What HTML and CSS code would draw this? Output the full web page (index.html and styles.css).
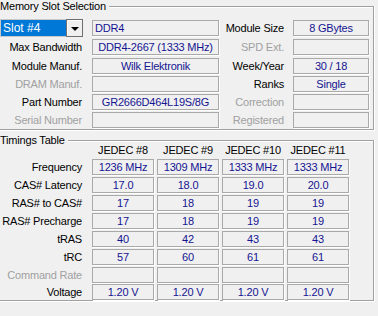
FILE: index.html
```html
<!DOCTYPE html>
<html>
<head>
<meta charset="utf-8">
<link rel="stylesheet" href="styles.css">
</head>
<body>
<div class="group group-slot">
  <div class="legend">Memory Slot Selection</div>
  <div class="slot-grid">
    <div class="combo">
      <div class="combo-value">Slot #4</div>
      <div class="combo-btn"><span class="arrow"></span></div>
    </div>
    <div class="box left">DDR4</div>
    <div class="lbl">Module Size</div>
    <div class="box">8 GBytes</div>

    <div class="lbl">Max Bandwidth</div>
    <div class="box">DDR4-2667 (1333 MHz)</div>
    <div class="lbl dis">SPD Ext.</div>
    <div class="box"></div>

    <div class="lbl">Module Manuf.</div>
    <div class="box">Wilk Elektronik</div>
    <div class="lbl">Week/Year</div>
    <div class="box">30 / 18</div>

    <div class="lbl dis">DRAM Manuf.</div>
    <div class="box"></div>
    <div class="lbl">Ranks</div>
    <div class="box">Single</div>

    <div class="lbl">Part Number</div>
    <div class="box">GR2666D464L19S/8G</div>
    <div class="lbl dis">Correction</div>
    <div class="box"></div>

    <div class="lbl dis">Serial Number</div>
    <div class="box"></div>
    <div class="lbl dis">Registered</div>
    <div class="box"></div>
  </div>
</div>

<div class="group group-timings">
  <div class="legend legend-t">Timings Table</div>
  <div class="t-grid">
    <div></div>
    <div class="hdr">JEDEC #8</div>
    <div class="hdr">JEDEC #9</div>
    <div class="hdr">JEDEC #10</div>
    <div class="hdr">JEDEC #11</div>

    <div class="tlbl">Frequency</div>
    <div class="box">1236 MHz</div>
    <div class="box">1309 MHz</div>
    <div class="box">1333 MHz</div>
    <div class="box">1333 MHz</div>

    <div class="tlbl">CAS# Latency</div>
    <div class="box">17.0</div>
    <div class="box">18.0</div>
    <div class="box">19.0</div>
    <div class="box">20.0</div>

    <div class="tlbl">RAS# to CAS#</div>
    <div class="box">17</div>
    <div class="box">18</div>
    <div class="box">19</div>
    <div class="box">19</div>

    <div class="tlbl">RAS# Precharge</div>
    <div class="box">17</div>
    <div class="box">18</div>
    <div class="box">19</div>
    <div class="box">19</div>

    <div class="tlbl">tRAS</div>
    <div class="box">40</div>
    <div class="box">42</div>
    <div class="box">43</div>
    <div class="box">43</div>

    <div class="tlbl">tRC</div>
    <div class="box">57</div>
    <div class="box">60</div>
    <div class="box">61</div>
    <div class="box">61</div>

    <div class="tlbl dis">Command Rate</div>
    <div class="box"></div>
    <div class="box"></div>
    <div class="box"></div>
    <div class="box"></div>

    <div class="tlbl">Voltage</div>
    <div class="box">1.20 V</div>
    <div class="box">1.20 V</div>
    <div class="box">1.20 V</div>
    <div class="box">1.20 V</div>
  </div>
</div>
</body>
</html>
```

FILE: styles.css
```css
html, body {
  margin: 0;
  padding: 0;
  background: #f0f0f0;
}
body {
  font-family: "Liberation Sans", Arial, sans-serif;
  font-size: 11px;
  letter-spacing: -0.2px;
  color: #000;
  width: 378px;
  height: 316px;
  overflow: hidden;
}
.group {
  width: 374px;
  box-sizing: border-box;
  border-top: 1px solid #a0a0a0;
  border-right: 1px solid #a0a0a0;
  border-bottom: 1px solid #a0a0a0;
  box-shadow: inset 0 1px 0 #fff, 1px 0 0 #fff, 0 1px 0 #fff, 1px 1px 0 #fff;
}
.group-slot {
  margin-top: 6px;
  padding-bottom: 1px;
}
.group-timings {
  margin-top: 10px;
  padding-bottom: 0;
}
.legend {
  width: fit-content;
  background: #f0f0f0;
  padding-right: 3px;
  height: 13px;
  line-height: 13px;
  margin-top: -7px;
}
.slot-grid {
  margin-top: 6px;
  display: grid;
  grid-template-columns: 92px 127px 74px 76px;
  grid-template-rows: 18px repeat(5, 16px);
  row-gap: 2.3px;
}
.lbl {
  text-align: right;
  line-height: 16px;
  white-space: nowrap;
  align-self: center;
}
.slot-grid .lbl:nth-child(4n+1) { padding-right: 10px; }
.slot-grid .lbl:nth-child(4n+3) { padding-right: 9px; }
.dis { color: #a0a0a0; }
.box {
  box-sizing: border-box;
  height: 16px;
  border: 1px solid #a9a9a9;
  box-shadow: 1px 1px 0 #fff;
  color: #141490;
  text-align: center;
  line-height: 14px;
  white-space: nowrap;
  overflow: hidden;
  align-self: center;
}
.box.left {
  text-align: left;
  padding-left: 2px;
}
.combo {
  box-sizing: border-box;
  width: 83px;
  height: 18px;
  display: flex;
  background: #fff;
  border: 1px solid #c8c8c8;
  border-right: none;
}
.combo-value {
  flex: 1;
  margin: 0;
  background: #0078d7;
  color: #fff;
  line-height: 16px;
  padding-left: 2px;
  font-size: 12px;
  letter-spacing: 0;
}
.combo-btn {
  box-sizing: border-box;
  width: 17px;
  height: 18px;
  margin-top: -1px;
  border: 1px solid #6e6e6e;
  background: #f0f0f0;
  box-shadow: inset 1px 1px 0 #fff;
  display: flex;
  align-items: center;
  justify-content: center;
}
.arrow {
  width: 0;
  height: 0;
  border-left: 4px solid transparent;
  border-right: 4px solid transparent;
  border-top: 4px solid #000;
  margin-top: 1px;
}
.legend-t {
  margin-bottom: -4px;
}
.t-grid {
  display: grid;
  grid-template-columns: 89px repeat(4, 62px);
  grid-template-rows: 14px repeat(8, 16px);
  column-gap: 3px;
  row-gap: 1.86px;
}
.hdr {
  text-align: center;
  line-height: 14px;
  white-space: nowrap;
}
.tlbl {
  text-align: right;
  padding-right: 7px;
  line-height: 16px;
  white-space: nowrap;
}
```
